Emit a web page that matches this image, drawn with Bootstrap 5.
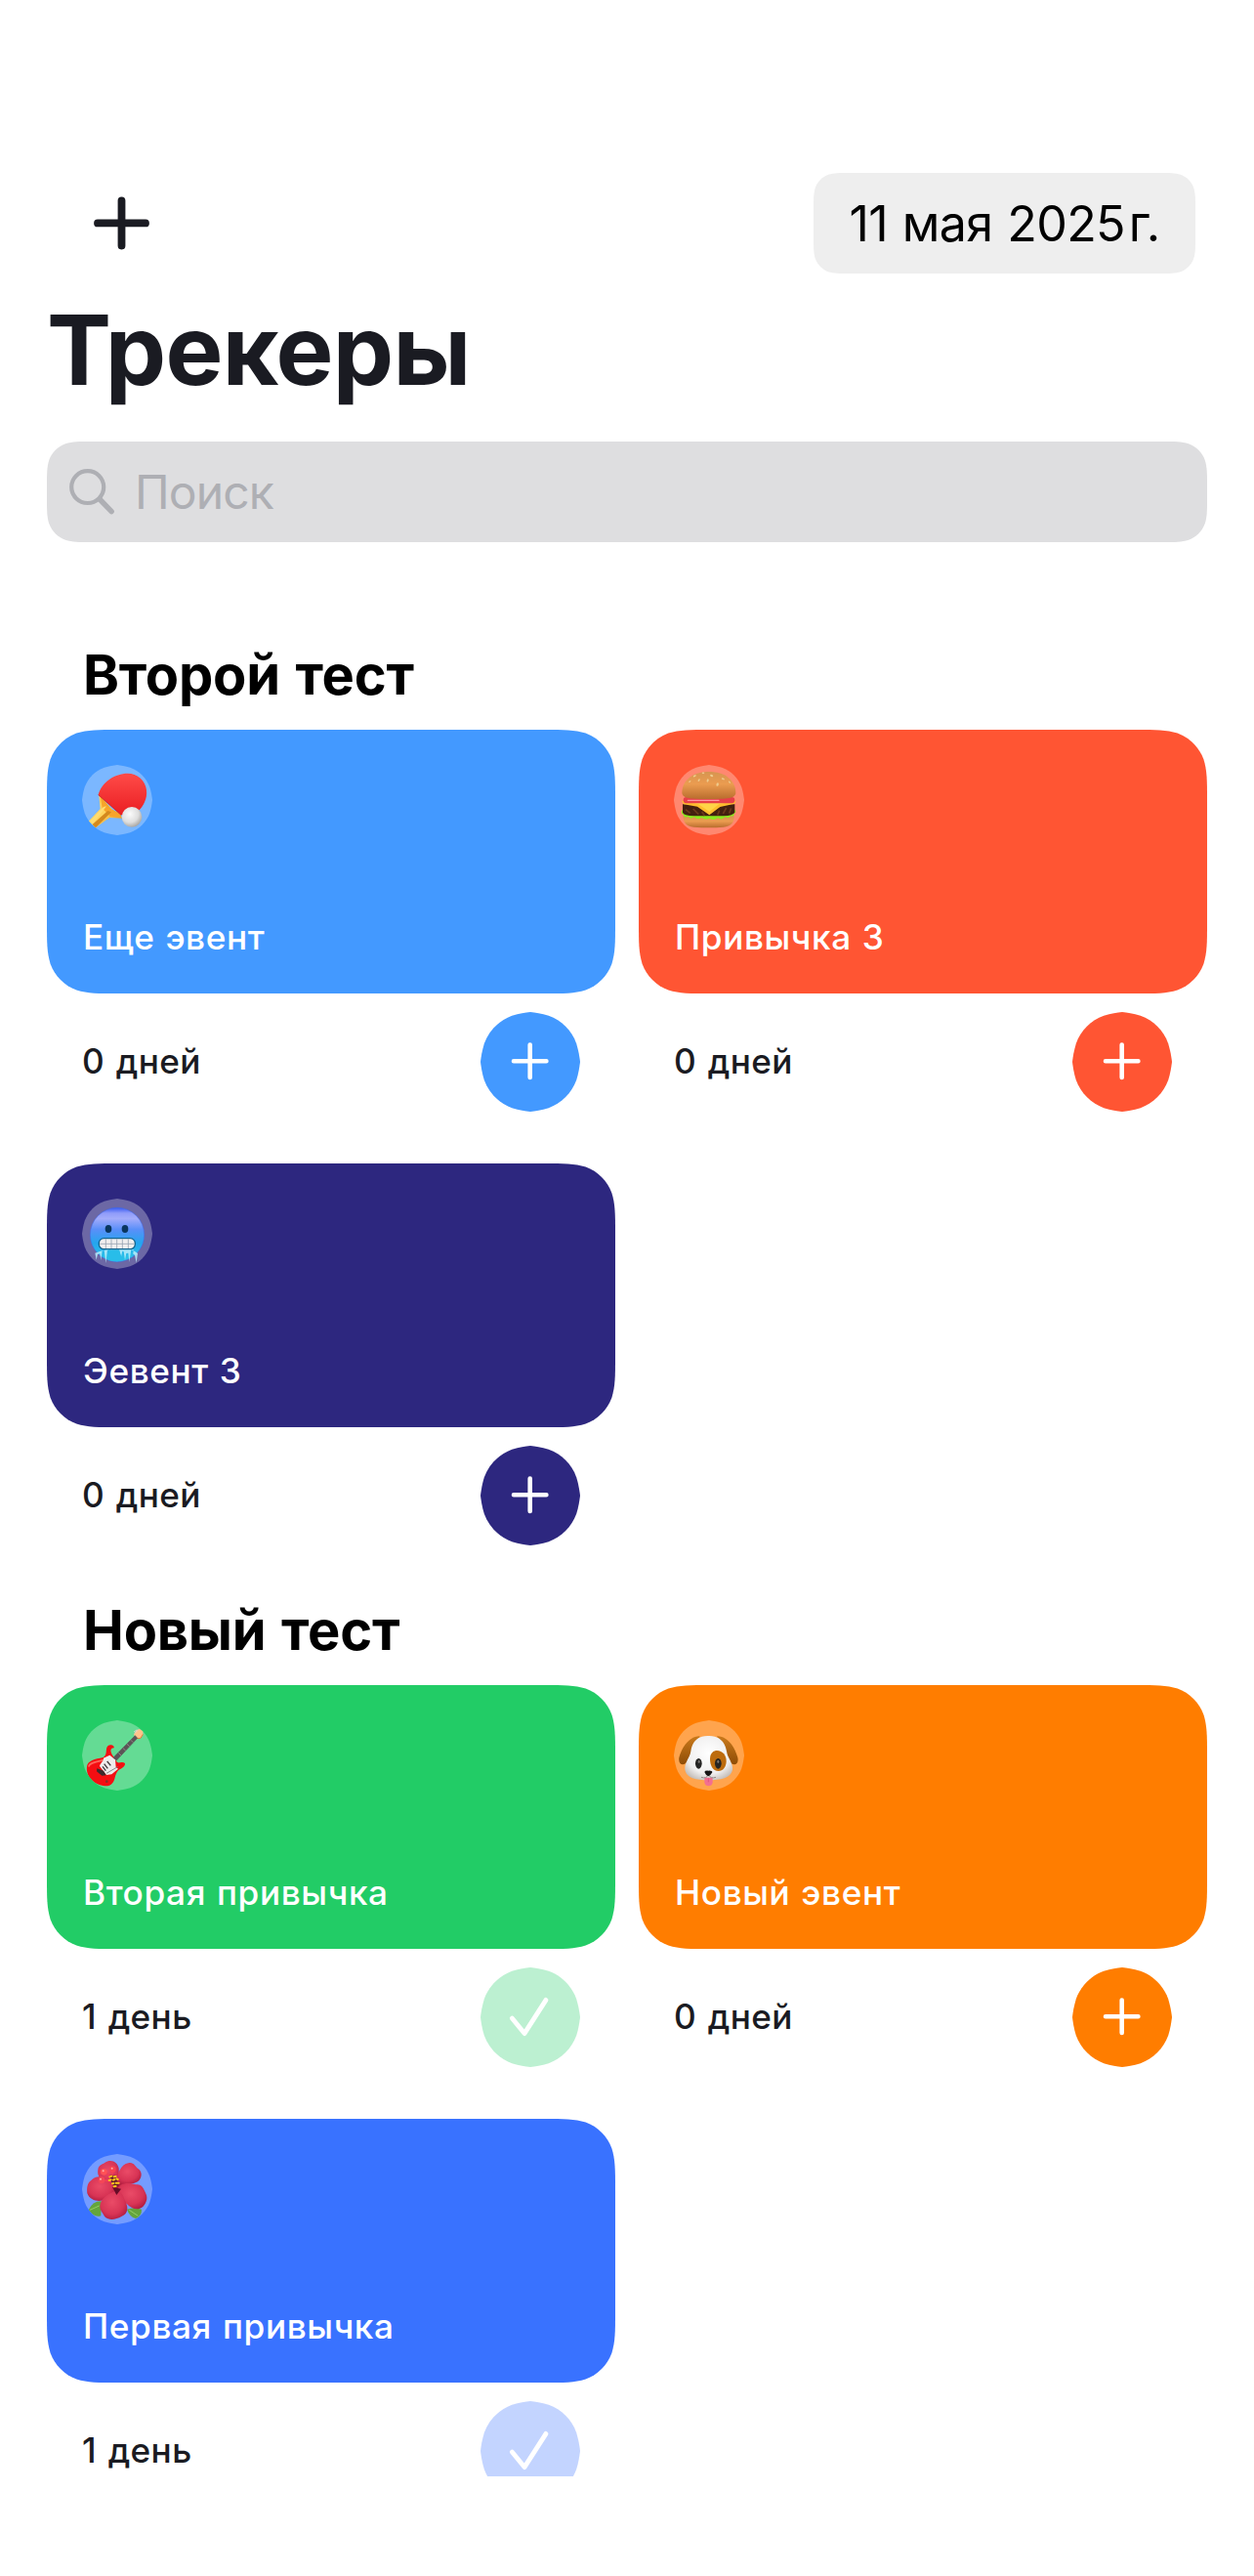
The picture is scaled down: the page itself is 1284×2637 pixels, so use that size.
<!DOCTYPE html>
<html lang="ru">
<head>
<meta charset="utf-8">
<meta name="viewport" content="width=device-width, initial-scale=1">
<title>Трекеры</title>
<link href="https://cdn.jsdelivr.net/npm/bootstrap@5.3.0/dist/css/bootstrap.min.css" rel="stylesheet">
<style>
  body { font-family: Inter, "Liberation Sans", sans-serif; color: #1a1b22; background: #fff; }
  .screen { width: 1284px; height: 2535px; overflow: hidden; padding: 177px 48px 0; }
  .topbar { height: 103px; padding: 0 12px 0 48px; }
  .date-pill { width: 391px; height: 103px; border-radius: 24px; background: #eee; color: #000; font-size: 50.2px; letter-spacing: -.7px; word-spacing: 1.5px; white-space: nowrap; }
  .page-title { font-size: 99px; line-height: 100px; font-weight: 700; margin: 28px 0 44px; letter-spacing: -.7px; }
  .search { height: 103px; border-radius: 30px; background: #dedee0; padding-left: 23px; margin-bottom: 102px; }
  .search input { font-size: 48px; color: #1a1b22; padding: 0 0 0 20px; letter-spacing: -.9px; }
  .search input::placeholder { color: #aeafb4; opacity: 1; }
  .group-title { height: 90px; line-height: 68px; font-size: 56px; font-weight: 700; color: #000; padding-left: 37px; margin: 0; letter-spacing: -.2px; word-spacing: 2.5px; }
  .grid { display: grid; grid-template-columns: 582px 582px; column-gap: 24px; }
  .tracker { height: 444px; font-size: 35.2px; font-weight: 500; }
  .tile { height: 270px; border-radius: 48px; background: var(--tint); color: #fff; padding: 36px 36px 34px; line-height: 48px; letter-spacing: .6px; }
  .tile-name { padding-left: 1px; word-spacing: 1px; }
  .chip { width: 72px; height: 72px; border-radius: 36px; background: rgba(255,255,255,.3); }
  .tile-foot { padding: 19px 36px 0; }
  .days { line-height: 48px; margin-bottom: 2px; letter-spacing: .35px; word-spacing: 2px; }
  .round-btn { width: 102px; height: 102px; border-radius: 51px; background: var(--tint); }
  .round-btn.is-done { opacity: .3; }
  .t-sky { --tint: #4399ff; } .t-red { --tint: #ff5533; } .t-navy { --tint: #2d277f; }
  .t-green { --tint: #22cc66; } .t-orange { --tint: #ff7d00; } .t-blue { --tint: #3972ff; }
</style>
</head>
<body>
<svg width="0" height="0" class="position-absolute" aria-hidden="true">
  <defs>
    <symbol id="plus" viewBox="0 0 102 102"><path d="M34 50.3H67.4M50.7 33.6V67" stroke="#fff" stroke-width="4.6" stroke-linecap="round"/></symbol>
    <symbol id="check" viewBox="0 0 102 102"><path d="M32.3 52L45 67.6L67 33.4" fill="none" stroke="#fff" stroke-width="4.8" stroke-linecap="round" stroke-linejoin="round"/></symbol>
    <linearGradient id="gRed" x2="0" y2="1"><stop stop-color="#ff4b48"/><stop offset="1" stop-color="#ea1e23"/></linearGradient>
    <linearGradient id="gWood" x1="0" y1="0" x2="1" y2="1"><stop stop-color="#ffc04c"/><stop offset=".5" stop-color="#ffd45e"/><stop offset="1" stop-color="#d98416"/></linearGradient>
    <radialGradient id="gBall" cx=".4" cy=".35" r=".7"><stop stop-color="#fbfbfb"/><stop offset=".6" stop-color="#dedede"/><stop offset="1" stop-color="#a3a09c"/></radialGradient>
    <linearGradient id="gBun" x2="0" y2="1"><stop stop-color="#d69550"/><stop offset=".45" stop-color="#eb9c50"/><stop offset="1" stop-color="#b96d2e"/></linearGradient>
    <linearGradient id="gCold" x2="0" y2="1"><stop stop-color="#3a5bf0"/><stop offset=".1" stop-color="#8f9cfa"/><stop offset=".2" stop-color="#a3acfb"/><stop offset=".4" stop-color="#5a8ff9"/><stop offset=".65" stop-color="#25a5ee"/><stop offset="1" stop-color="#2cc9e6"/></linearGradient>
    <radialGradient id="gFur" cx=".5" cy=".4" r=".65"><stop stop-color="#fff"/><stop offset=".7" stop-color="#f0efef"/><stop offset="1" stop-color="#c3bdb8"/></radialGradient>
    <linearGradient id="gEar" x2="0" y2="1"><stop stop-color="#c9791b"/><stop offset="1" stop-color="#8f4d06"/></linearGradient>
    <radialGradient id="gPetal" cx=".45" cy=".4" r=".65"><stop stop-color="#ea4b67"/><stop offset=".65" stop-color="#d83455"/><stop offset="1" stop-color="#b01c3f"/></radialGradient>
  </defs>
</svg>

<main class="screen">
  <header class="topbar d-flex justify-content-between align-items-center">
    <svg width="57" height="56" viewBox="0 0 57 56" role="img" aria-label="Добавить"><path d="M4 27.4H53M28.5 4.3V50.5" stroke="#1a1b22" stroke-width="7.8" stroke-linecap="round"/></svg>
    <div class="date-pill d-flex align-items-center justify-content-center" data-r="24"><span>11 мая 2025&#8202;г.</span></div>
  </header>
  <h1 class="page-title">Трекеры</h1>
  <div class="search d-flex align-items-center" data-r="30">
    <svg width="47" height="48" viewBox="0 0 47 48" class="flex-shrink-0" fill="none" stroke="#aeafb4" stroke-linecap="round"><ellipse cx="18.7" cy="18.6" rx="16.5" ry="16.4" stroke-width="4.2"/><path d="M31.5 31.5L43.2 43.6" stroke-width="5.4"/></svg>
    <input type="text" class="form-control border-0 bg-transparent shadow-none h-100" placeholder="Поиск" aria-label="Поиск">
  </div>

  <section>
    <h2 class="group-title">Второй тест</h2>
    <div class="grid">
      <article class="tracker t-sky">
        <div class="tile d-flex flex-column justify-content-between" data-r="48">
          <svg class="chip" data-r="36" viewBox="42 39 216 216">
            <path d="M94 132L136 177L160 193L166 203L126 201L84 232L62 212L98 174Z" fill="url(#gWood)"/>
            <path d="M98 133L132 175L163 190L158 200L128 197L104 172Z" fill="#f7a42a"/>
            <path d="M64 212L108 168L117 166L74 222Z" fill="#ffdc70"/><path d="M74 222L121 180L132 184L84 232Z" fill="#d4891d"/>
            <path d="M92 131C101 93 143 65 182 65C211 65 237 86 240 116C243 143 231 164 215 181C202 188 180 194 162 193Z" fill="url(#gRed)"/>
            <path d="M92 131L162 193" stroke="#c3131c" stroke-width="2"/>
            <circle cx="195" cy="199" r="31" fill="url(#gBall)"/>
          </svg>
          <div class="tile-name">Еще эвент</div>
        </div>
        <div class="tile-foot d-flex align-items-center justify-content-between"><span class="days">0 дней</span><svg class="round-btn" data-r="51"><use href="#plus"/></svg></div>
      </article>

      <article class="tracker t-red">
        <div class="tile d-flex flex-column justify-content-between" data-r="48">
          <svg class="chip" data-r="36" viewBox="42 39 216 216">
            <path d="M70 196H227C228 216 218 229 194 230Q150 233 103 230C80 228 71 216 70 196Z" fill="url(#gBun)"/>
            <path d="M67 178Q62 188 71 192Q75 204 86 197Q94 208 104 199Q115 210 127 201Q140 209 151 203Q165 212 177 202Q190 210 199 199Q210 205 217 196Q228 199 227 188Q236 183 229 176Z" fill="#8bea1d"/>
            <path d="M69 160H229V185Q224 194 195 196H104Q72 195 69 185Z" fill="#43200f"/>
            <path d="M78 176L92 187M101 174L118 191M128 183L136 195M182 179L176 193M203 171L193 189M218 172L212 188" stroke="#6b391c" stroke-width="5"/>
            <path d="M66 149H232L229 158L184 168L151 193L114 167L72 160Z" fill="#ffbd2d"/><path d="M68 151H228L180 160L151 183L118 160Z" fill="#ffd447"/>
            <rect x="71" y="138" width="158" height="19" rx="9" fill="#e73f48"/><path d="M85 148H180" stroke="#ff98a0" stroke-width="4" stroke-linecap="round"/>
            <path d="M67 126C66 85 103 60 150 60S233 85 232 127C227 143 207 144 150 144S71 143 67 126Z" fill="url(#gBun)"/>
            <g fill="#eecb8d"><ellipse cx="132" cy="64" rx="4" ry="2.5"/><ellipse cx="158" cy="72" rx="5" ry="3" transform="rotate(20 158 72)"/><ellipse cx="106" cy="73" rx="5" ry="2.5" transform="rotate(-30 106 73)"/><ellipse cx="146" cy="87" rx="3" ry="5" transform="rotate(20 146 87)"/><ellipse cx="176" cy="99" rx="3.5" ry="5.5" transform="rotate(15 176 99)"/><ellipse cx="119" cy="86" rx="2.5" ry="4.5" transform="rotate(30 119 86)"/><ellipse cx="193" cy="82" rx="5" ry="2.5" transform="rotate(25 193 82)"/><ellipse cx="213" cy="92" rx="4" ry="2" transform="rotate(40 213 92)"/><ellipse cx="91" cy="90" rx="4" ry="2" transform="rotate(-40 91 90)"/></g>
          </svg>
          <div class="tile-name">Привычка 3</div>
        </div>
        <div class="tile-foot d-flex align-items-center justify-content-between"><span class="days">0 дней</span><svg class="round-btn" data-r="51"><use href="#plus"/></svg></div>
      </article>

      <article class="tracker t-navy">
        <div class="tile d-flex flex-column justify-content-between" data-r="48">
          <svg class="chip" data-r="36" viewBox="42 39 216 216">
            <circle cx="150" cy="150" r="83" fill="url(#gCold)" stroke="#3d6bf2" stroke-opacity=".5" stroke-width="3"/>
            <ellipse cx="123" cy="132" rx="10" ry="12" fill="#09365f"/><ellipse cx="174" cy="132" rx="10" ry="12" fill="#09365f"/>
            <path d="M82 206L86 227L90 210L97 208L100 229L104 198H110L115 237L120 197L128 196L131 207L136 197H156L162 218L166 200L170 202L174 228L178 207L184 206L187 234L193 195H200L199 209L204 212L209 236L213 207Q189 188 169 194Q138 187 82 206Z" fill="#b9edfa" opacity=".85"/>
            <path d="M124 196H156L163 219L168 207L172 226Q155 237 122 228Z" fill="#28bde9"/>
            <rect x="94" y="161" width="111" height="33" rx="15" fill="#f1efef" stroke="#14658f" stroke-width="4"/>
            <path d="M97 178H202M115 163V192M132 163V192M149 163V192M166 163V192M184 163V192" stroke="#97a3b2" stroke-width="2.5"/>
          </svg>
          <div class="tile-name">Эевент 3</div>
        </div>
        <div class="tile-foot d-flex align-items-center justify-content-between"><span class="days">0 дней</span><svg class="round-btn" data-r="51"><use href="#plus"/></svg></div>
      </article>
    </div>
  </section>

  <section>
    <h2 class="group-title">Новый тест</h2>
    <div class="grid">
      <article class="tracker t-green">
        <div class="tile d-flex flex-column justify-content-between" data-r="48">
          <svg class="chip" data-r="36" viewBox="42 39 216 216">
            <path d="M201 83L208 70L218 66L229 72L229 84L221 95L210 97Z" fill="#ffc38b"/><path d="M201 75L211 68M204 79L215 68" stroke="#d8d8d8" stroke-width="2.5"/><path d="M208 95L222 94L229 82" fill="none" stroke="#e17f36" stroke-width="3"/>
            <path d="M57 181C59 163 82 158 107 153C122 145 112 125 122 117C130 111 143 117 140 124C129 124 128 133 134 144L148 166C153 174 163 164 174 171C175 179 169 184 161 188C151 191 146 203 142 219C136 237 126 242 112 241C82 238 53 216 57 181Z" fill="#f40e12"/>
            <path d="M63 180C65 169 87 166 109 161" stroke="#ff6259" stroke-width="5" fill="none" stroke-linecap="round"/>
            <path d="M108 155L127 146L144 160L146 183L153 188L133 205L117 207L96 180C97 170 109 166 108 155Z" fill="#efedec"/>
            <path d="M138 154L205 86L212 94L148 162Z" fill="#5c5457" stroke="#5c5457" stroke-width="2"/><path d="M154 139L162 147M168 125L176 132M180 112L188 119M192 100L199 107" stroke="#aaa0a2" stroke-width="2"/>
            <path d="M105 181L115 194M110 173L121 187M119 165L130 178" stroke="#41383a" stroke-width="4"/><path d="M88 187L108 194L116 208L103 209L87 196Z" fill="#3b2b2d"/><path d="M117 202L153 181" stroke="#77777a" stroke-width="2.5"/><circle cx="118" cy="227" r="4" fill="#8b2d28"/>
          </svg>
          <div class="tile-name">Вторая привычка</div>
        </div>
        <div class="tile-foot d-flex align-items-center justify-content-between"><span class="days">1 день</span><svg class="round-btn is-done" data-r="51"><use href="#check"/></svg></div>
      </article>

      <article class="tracker t-orange">
        <div class="tile d-flex flex-column justify-content-between" data-r="48">
          <svg class="chip" data-r="36" viewBox="42 39 216 216">
            <path d="M122 88C91 87 68 119 58 153C54 174 71 183 83 166L107 115Z" fill="url(#gEar)"/><path d="M174 88C206 87 228 119 238 153C243 174 226 183 213 166L190 115Z" fill="url(#gEar)"/>
            <path d="M148 87C177 86 198 101 204 134C207 156 224 168 222 190C219 217 184 223 148 223S79 217 76 190C74 168 91 156 94 134C99 101 119 86 148 87Z" fill="url(#gFur)"/>
            <path d="M171 132C190 130 204 146 203 166C202 184 193 195 179 195C161 194 153 177 153 158C153 145 159 134 171 132Z" fill="#bd6c0e"/>
            <ellipse cx="118" cy="172" rx="10" ry="16" fill="#252423"/><ellipse cx="178" cy="172" rx="10" ry="16" fill="#252423"/><ellipse cx="119" cy="166" rx="3" ry="5" fill="#77736f"/><ellipse cx="178" cy="166" rx="3" ry="5" fill="#77736f"/>
            <path d="M136 215H161V230C159 244 138 244 136 230Z" fill="#f36f90"/><path d="M148 217V229" stroke="#d64974" stroke-width="2"/>
            <path d="M126 214Q142 220 148 206Q155 220 171 214" fill="none" stroke="#918985" stroke-width="3"/><path d="M136 198Q137 193 148 194Q160 193 160 199Q156 207 148 211Q139 207 136 198Z" fill="#171515"/>
          </svg>
          <div class="tile-name">Новый эвент</div>
        </div>
        <div class="tile-foot d-flex align-items-center justify-content-between"><span class="days">0 дней</span><svg class="round-btn" data-r="51"><use href="#plus"/></svg></div>
      </article>

      <article class="tracker t-blue">
        <div class="tile d-flex flex-column justify-content-between" data-r="48">
          <svg class="chip" data-r="36" viewBox="42 39 216 216">
            <path d="M62 211Q75 183 101 184L100 229Q79 236 62 211Z" fill="#64a53c"/><path d="M180 209Q202 200 225 209Q226 229 207 237Q188 232 180 209Z" fill="#64a53c"/><path d="M66 211L95 198M187 211L214 229" stroke="#96ce66" stroke-width="3"/>
            <path d="M130 110L165 115L195 150L170 190L120 180L115 150Z" fill="#a51a3b"/>
            <path d="M143 137C111 137 86 112 91 87C93 70 107 72 115 64C132 53 152 64 155 83L156 127Z" fill="url(#gPetal)"/>
            <path d="M146 133C149 101 162 69 184 67C200 62 205 77 214 84C229 93 226 114 213 124C194 136 165 132 146 133Z" fill="url(#gPetal)"/>
            <path d="M144 148C120 103 86 101 70 120C56 129 57 147 58 160C65 181 91 187 107 181C124 177 143 165 144 148Z" fill="url(#gPetal)"/>
            <path d="M151 149C151 127 188 125 207 133C225 130 230 143 237 158C247 176 237 192 229 201C212 215 193 206 180 193C163 180 152 164 151 149Z" fill="url(#gPetal)"/>
            <path d="M150 151C131 157 104 170 98 193C93 211 107 221 112 232C126 245 147 240 163 231C183 224 185 204 176 187C170 170 163 155 150 151Z" fill="url(#gPetal)"/>
            <path d="M135 140L148 165L162 146Z" fill="#650c27"/><path d="M142 116L112 96M136 110L135 88M137 123L104 119" stroke="#ef3e57" stroke-width="6"/>
            <circle cx="109" cy="94" r="10" fill="#ff5256"/><circle cx="136" cy="86" r="10" fill="#f64251"/><circle cx="102" cy="119" r="10" fill="#f34757"/><g fill="#ffb0a8"><circle cx="107" cy="91" r="3"/><circle cx="134" cy="83" r="3"/><circle cx="99" cy="116" r="3"/></g>
            <path d="M127 104H144L155 134L142 141L132 124Z" fill="#641e2d"/><path d="M127 109L133 107M140 109L146 108M125 120L131 118M138 119L142 117M148 115L152 117M135 130L139 129M146 128L155 128M140 139L146 138" stroke="#ffc51d" stroke-width="6" stroke-linecap="round"/>
          </svg>
          <div class="tile-name">Первая привычка</div>
        </div>
        <div class="tile-foot d-flex align-items-center justify-content-between"><span class="days">1 день</span><svg class="round-btn is-done" data-r="51"><use href="#check"/></svg></div>
      </article>
    </div>
  </section>
</main>
<script src="https://cdn.jsdelivr.net/npm/bootstrap@5.3.0/dist/js/bootstrap.bundle.min.js"></script>
<script>
  // Continuous corners: the curvature eases in over about 1.53 radii on each side.
  document.querySelectorAll('[data-r]').forEach(el => {
    const w = el.clientWidth || el.getBoundingClientRect().width;
    const h = el.clientHeight || el.getBoundingClientRect().height;
    const r = +el.dataset.r;
    const full = Math.min(w, h) / 2 <= r;
    const e = full ? r : 1.528665 * r, a = full ? .9 * r : 1.08849 * r, b = full ? .78 * r : .868407 * r;
    const k = full ? .012 * r : 0, m = full ? .03 * r : 0, c = .631494 * r, d = .074911 * r, f = .372824 * r, g = .16906 * r;
    const corner = [[e, 0], [a, k], [b, m], [c, d], [(c + f) / 2, (d + g) / 2 - .012 * r], [f + .06 * r, g - .045 * r], [f, g]];
    // Quarter outline from the top edge to the left edge, mirrored about the diagonal.
    const mid = [[.54 * r, .105 * r], [.455 * r, .128 * r], [f, g]];
    const arc = [[e, 0], [a, k], [b, m], [c, d], [f, g], [g, f], [d, c], [m, b], [k, a], [0, e]];
    const rev = arc.slice().reverse();
    const seg = pts => 'L' + pts[0].join(' ') + [1, 4, 7].map(i => 'C' + pts.slice(i, i + 3).map(p => p.join(' ')).join(' ')).join('');
    const path = seg(rev).replace('L', 'M')
      + seg(arc.map(([x, y]) => [w - x, y]))
      + seg(rev.map(([x, y]) => [w - x, h - y]))
      + seg(arc.map(([x, y]) => [x, h - y])) + 'Z';
    el.style.borderRadius = '0';
    el.style.clipPath = `path("${path}")`;
  });
</script>
</body>
</html>
